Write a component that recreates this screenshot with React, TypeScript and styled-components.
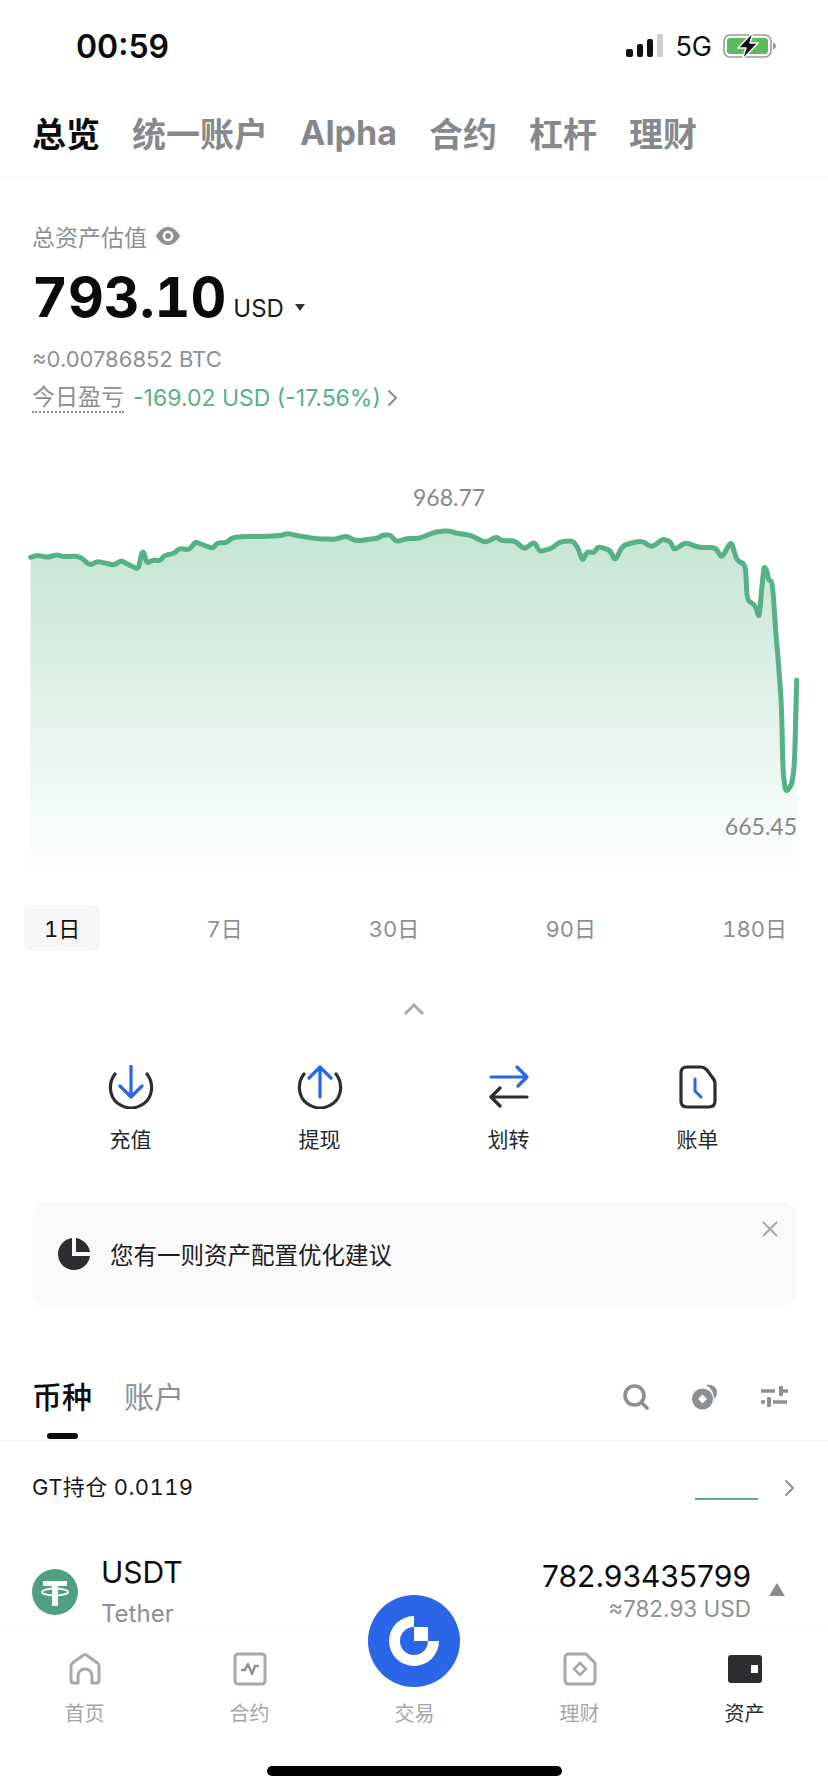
import React from 'react';
import styled, { createGlobalStyle } from 'styled-components';

const FONT = 'Inter, "Noto Sans CJK SC", sans-serif';
const GREEN = '#57b186';
const GRAY = '#8b9095';
const DARK = '#2b2d31';
const BLUE = '#2b66e8';

// traced from the reference at 1.894x horizontal, 3x vertical
const TRACE = [
  [58, 262], [70, 256], [90, 262], [108, 254], [120, 260], [145, 258], [155, 265], [170, 285], [185, 274], [200, 280],
  [215, 285], [230, 272], [245, 285], [262, 298], [268, 250], [272, 245], [278, 280], [290, 270], [303, 272], [312, 256],
  [330, 250], [340, 235], [358, 240], [370, 215], [385, 225], [403, 235], [412, 218], [428, 218], [443, 200], [530, 198],
  [545, 190], [565, 198], [600, 206], [635, 208], [655, 198], [675, 213], [715, 205], [725, 195], [740, 195], [750, 215],
  [770, 206], [795, 205], [825, 185], [850, 182], [865, 190], [890, 195], [920, 218], [940, 200], [950, 212], [975, 212],
  [993, 238], [1012, 215], [1022, 245], [1045, 235], [1060, 215], [1085, 212], [1095, 235], [1103, 273], [1112, 245],
  [1125, 248], [1133, 230], [1155, 240], [1165, 272], [1180, 225], [1215, 212], [1235, 232], [1255, 207], [1270, 215],
  [1277, 240], [1298, 217], [1325, 233], [1355, 232], [1367, 265], [1385, 212], [1395, 270], [1412, 285], [1415, 390],
  [1430, 405], [1438, 445], [1443, 350], [1447, 290], [1452, 300], [1456, 330], [1463, 335], [1470, 500], [1473, 550],
  [1480, 700], [1483, 900], [1487, 960], [1492, 962], [1500, 940], [1505, 880], [1509, 630],
];
const POINTS = TRACE.map(([x, y]) => [x / 1.894, y / 3]);

// straight runs with small rounded corners, the line in the reference is jagged but soft
function roundedPath(points: number[][], amount = 0.3) {
  const fmt = (x: number, y: number) => `${x.toFixed(1)},${y.toFixed(1)}`;
  let d = `M${fmt(points[0][0], points[0][1])}`;
  for (let i = 1; i < points.length - 1; i++) {
    const [x, y] = points[i];
    const [px, py] = points[i - 1];
    const [nx, ny] = points[i + 1];
    d += ` L${fmt(x - (x - px) * amount, y - (y - py) * amount)}`;
    d += ` Q${fmt(x, y)} ${fmt(x + (nx - x) * amount, y + (ny - y) * amount)}`;
  }
  const last = points[points.length - 1];
  return `${d} L${fmt(last[0], last[1])}`;
}

const LINE_PATH = roundedPath(POINTS);
const AREA_PATH = `${LINE_PATH} L797,400 L30,400 Z`;

const TOP_TABS = ['总览', '统一账户', 'Alpha', '合约', '杠杆', '理财'];
const RANGES = ['1日', '7日', '30日', '90日', '180日'];

const GlobalStyle = createGlobalStyle`
  html, body {
    margin: 0;
    background: #fff;
  }
  body {
    font-family: ${FONT};
  }
`;

function SignalIcon() {
  return (
    <svg width="38" height="24" viewBox="0 0 38 24">
      <rect x="0" y="15" width="7" height="8" rx="2" fill="#111" />
      <rect x="11" y="10" width="6" height="13" rx="2" fill="#111" />
      <rect x="21" y="5" width="6" height="18" rx="2" fill="#111" />
      <rect x="31" y="0" width="6" height="23" rx="1" fill="#cfcfcf" />
    </svg>
  );
}

function BatteryIcon() {
  return (
    <svg width="54" height="28" viewBox="0 0 54 28">
      <rect x="1" y="3" width="47" height="22" rx="6" fill="none" stroke="#9a9a9a" strokeWidth="1.6" />
      <rect x="4" y="6" width="41" height="16" rx="3" fill="#5cbb5f" />
      <path d="M50 10.5c2 .5 3 2 3 3.5s-1 3-3 3.5z" fill="#9a9a9a" />
      <path d="M30 0 L15 16 H23 L19 28 L35 11 H27 Z" fill="#111" stroke="#fff" strokeWidth="1.4" strokeLinejoin="round" />
    </svg>
  );
}

function EyeIcon() {
  return (
    <svg width="26" height="20" viewBox="0 0 26 20">
      <path d="M1 10 C5 3 9 1 13 1 s8 2 12 9 c-4 7-8 9-12 9 S5 17 1 10z" fill={GRAY} />
      <circle cx="13" cy="10" r="5.4" fill="#fff" />
      <circle cx="13" cy="10" r="3" fill={GRAY} />
    </svg>
  );
}

function ChevronRight({ color = GRAY }: { color?: string }) {
  return (
    <svg width="11" height="18" viewBox="0 0 11 18">
      <path d="M2 2 L9 9 L2 16" fill="none" stroke={color} strokeWidth="2" strokeLinecap="round" />
    </svg>
  );
}

function DepositIcon() {
  return (
    <svg width="46" height="44" viewBox="0 0 46 44">
      <path d="M7 9 C0 18 1 32 10 38.5 C15 42 19 43 23 43 C27 43 31 42 36 38.5 C45 32 46 18 39 9" fill="none" stroke={DARK} strokeWidth="3.2" strokeLinecap="round" />
      <path d="M23 1 V31 M12 21 L23 32 L34 21" fill="none" stroke={BLUE} strokeWidth="3.2" strokeLinecap="round" strokeLinejoin="round" />
    </svg>
  );
}

function WithdrawIcon() {
  return (
    <svg width="46" height="44" viewBox="0 0 46 44">
      <path d="M7 9 C0 18 1 32 10 38.5 C15 42 19 43 23 43 C27 43 31 42 36 38.5 C45 32 46 18 39 9" fill="none" stroke={DARK} strokeWidth="3.2" strokeLinecap="round" />
      <path d="M23 32 V2 M12 13 L23 2 L34 13" fill="none" stroke={BLUE} strokeWidth="3.2" strokeLinecap="round" strokeLinejoin="round" />
    </svg>
  );
}

function TransferIcon() {
  return (
    <svg width="42" height="44" viewBox="0 0 42 44">
      <path d="M3 12 H39 M29 2 L39 12 L30 21" fill="none" stroke={BLUE} strokeWidth="3.2" strokeLinecap="round" strokeLinejoin="round" />
      <path d="M39 32 H3 M12 23 L3 32 L12 41" fill="none" stroke={DARK} strokeWidth="3.2" strokeLinecap="round" strokeLinejoin="round" />
    </svg>
  );
}

function BillIcon() {
  return (
    <svg width="38" height="44" viewBox="0 0 38 44">
      <path d="M8 2 H22 C25 2 26 3 28 5 L33 12 C35 14 36 16 36 19 V36 C36 40 34 42 30 42 H8 C4 42 2 40 2 36 V8 C2 4 4 2 8 2 Z" fill="none" stroke={DARK} strokeWidth="3.2" />
      <path d="M16 14 V26 L22 32" fill="none" stroke={BLUE} strokeWidth="3" strokeLinecap="round" strokeLinejoin="round" />
    </svg>
  );
}

function PieIcon() {
  return (
    <svg width="32" height="32" viewBox="0 0 32 32">
      <path d="M14 0 V18 H32 C31 26 24 32 16 32 C7 32 0 25 0 16 C0 8 6 1 14 0 Z" fill={DARK} />
      <path d="M18 0 C25 1 31 7 32 14 H18 Z" fill={DARK} />
    </svg>
  );
}

function CloseIcon() {
  return (
    <svg width="16" height="16" viewBox="0 0 16 16">
      <path d="M1.5 1.5 L14.5 14.5 M14.5 1.5 L1.5 14.5" stroke="#a3a6a9" strokeWidth="1.8" strokeLinecap="round" />
    </svg>
  );
}

function SearchIcon() {
  return (
    <svg width="26" height="26" viewBox="0 0 26 26">
      <circle cx="11.5" cy="11.5" r="9.5" fill="none" stroke={GRAY} strokeWidth="3.6" />
      <path d="M19 19 L24 24" stroke={GRAY} strokeWidth="3.6" strokeLinecap="round" />
    </svg>
  );
}

function CoinsIcon() {
  return (
    <svg width="26" height="26" viewBox="0 0 26 26">
      <path d="M14 1 C20 0 25 3 25 8 C25 11 24 13 22 15 C22 9 19 4 14 1 Z" fill={GRAY} />
      <circle cx="10.5" cy="15" r="10.5" fill={GRAY} />
      <path d="M10.5 10.5 L15 15 L10.5 19.5 L6 15 Z" fill="#fff" />
    </svg>
  );
}

function SlidersIcon() {
  return (
    <svg width="27" height="22" viewBox="0 0 27 22">
      <path d="M0 5 H14 M19 5 H27 M0 16 H4 M12 16 H26" stroke={GRAY} strokeWidth="3.4" />
      <rect x="18" y="0" width="4" height="10" rx="1" fill={GRAY} />
      <rect x="6" y="11" width="4" height="10" rx="1" fill={GRAY} />
    </svg>
  );
}

function TetherIcon() {
  return (
    <svg width="46" height="46" viewBox="0 0 46 46">
      <circle cx="23" cy="23" r="23" fill="#50a07f" />
      <path d="M11 12 H35 V17 H26 V37 H20 V17 H11 Z" fill="#fff" />
      <ellipse cx="23" cy="23" rx="13" ry="3.5" fill="none" stroke="#fff" strokeWidth="1.8" />
    </svg>
  );
}

function HomeIcon() {
  return (
    <svg width="32" height="32" viewBox="0 0 32 32">
      <path d="M5 30 C3 30 2 29 2 27 V13 C2 12 2.5 11 3.5 10 L14 2.5 C15 1.5 17 1.5 18 2.5 L28.5 10 C29.5 11 30 12 30 13 V27 C30 29 29 30 27 30 H23 V23 C23 19 20 16 16 16 C12 16 9 19 9 23 V30 Z" fill="none" stroke="#a8a8a8" strokeWidth="3" strokeLinejoin="round" />
    </svg>
  );
}

function ContractIcon() {
  return (
    <svg width="34" height="34" viewBox="0 0 34 34">
      <rect x="2" y="2" width="30" height="30" rx="3" fill="none" stroke="#a8a8a8" strokeWidth="3" />
      <path d="M8 18 H12 L15 12 L19 22 L22 14 H26" fill="none" stroke="#8f8f8f" strokeWidth="2.4" strokeLinejoin="round" />
    </svg>
  );
}

function EarnIcon() {
  return (
    <svg width="34" height="34" viewBox="0 0 34 34">
      <path d="M6 2 H23 L32 11 V28 C32 30.5 30.5 32 28 32 H6 C3.5 32 2 30.5 2 28 V6 C2 3.5 3.5 2 6 2 Z" fill="none" stroke="#a8a8a8" strokeWidth="3" strokeLinejoin="round" />
      <path d="M17 11 L23 17 L17 23 L11 17 Z" fill="none" stroke="#a8a8a8" strokeWidth="2.6" />
    </svg>
  );
}

function WalletIcon() {
  return (
    <svg width="34" height="28" viewBox="0 0 34 28">
      <rect width="34" height="28" rx="3" fill={DARK} />
      <rect x="23" y="10" width="7" height="8" fill="#fff" />
    </svg>
  );
}

function GateLogo() {
  return (
    <svg width="50" height="50" viewBox="0 0 50 50">
      <path d="M25 0 A25 25 0 1 0 50 25 H39 A14 14 0 1 1 25 11 Z" fill="#fff" />
      <rect x="25" y="11" width="14" height="14" fill="#fff" />
    </svg>
  );
}

const ACTIONS = [
  { label: '充值', icon: <DepositIcon /> },
  { label: '提现', icon: <WithdrawIcon /> },
  { label: '划转', icon: <TransferIcon /> },
  { label: '账单', icon: <BillIcon /> },
];

const NAV_ITEMS = [
  { label: '首页', icon: <HomeIcon />, active: false },
  { label: '合约', icon: <ContractIcon />, active: false },
  { label: '交易', icon: null, active: false },
  { label: '理财', icon: <EarnIcon />, active: false },
  { label: '资产', icon: <WalletIcon />, active: true },
];

export default function App() {
  return (
    <Page>
      <GlobalStyle />
      <Main>
        <StatusBar>
          <Clock>00:59</Clock>
          <StatusRight>
            <SignalIcon />
            <Network>5G</Network>
            <BatteryIcon />
          </StatusRight>
        </StatusBar>

        <TopTabs>
          {TOP_TABS.map((tab, index) => (
            <TopTab key={tab} active={index === 0}>{tab}</TopTab>
          ))}
        </TopTabs>

        <Summary>
          <LabelRow>
            <span>总资产估值</span>
            <EyeIcon />
          </LabelRow>
          <BalanceRow>
            <Balance>793.10</Balance>
            <Currency>USD</Currency>
            <Caret />
          </BalanceRow>
          <BtcRow>≈0.00786852 BTC</BtcRow>
          <PnlRow>
            <PnlLabel>今日盈亏</PnlLabel>
            <PnlValue>-169.02 USD (-17.56%)</PnlValue>
            <ChevronRight />
          </PnlRow>
        </Summary>

        <Chart>
          <svg width="828" height="400" viewBox="0 0 828 400" style={{ display: 'block' }}>
            <defs>
              <linearGradient id="area" x1="0" y1="0" x2="0" y2="1">
                <stop offset="0" stopColor="#c4e5d4" />
                <stop offset="0.5" stopColor="#e0f2e9" />
                <stop offset="0.85" stopColor="#f5fbf8" />
                <stop offset="1" stopColor="#ffffff" />
              </linearGradient>
            </defs>
            <path d={AREA_PATH} fill="url(#area)" />
            <path d={LINE_PATH} fill="none" stroke={GREEN} strokeWidth="5" strokeLinejoin="round" strokeLinecap="round" />
          </svg>
          <HighLabel>968.77</HighLabel>
          <LowLabel>665.45</LowLabel>
        </Chart>

        <Ranges>
          {RANGES.map((range, index) => (
            <RangeItem key={range} active={index === 0}>{range}</RangeItem>
          ))}
        </Ranges>

        <CollapseRow>
          <svg width="22" height="14" viewBox="0 0 22 14">
            <path d="M2 12 L11 3 L20 12" fill="none" stroke="#a8abae" strokeWidth="3" />
          </svg>
        </CollapseRow>

        <Actions>
          {ACTIONS.map((action) => (
            <Action key={action.label}>
              <ActionIcon>{action.icon}</ActionIcon>
              <ActionLabel>{action.label}</ActionLabel>
            </Action>
          ))}
        </Actions>

        <Banner>
          <PieIcon />
          <BannerText>您有一则资产配置优化建议</BannerText>
          <BannerClose>
            <CloseIcon />
          </BannerClose>
        </Banner>

        <AssetTabs>
          <AssetTab active>
            币种
            <AssetTabMark />
          </AssetTab>
          <AssetTab>
            账户
            <AssetTabMark hidden />
          </AssetTab>
          <AssetTools>
            <SearchIcon />
            <CoinsIcon />
            <SlidersIcon />
          </AssetTools>
        </AssetTabs>

        <GtRow>
          <GtText>GT持仓 0.0119</GtText>
          <GtTrend />
          <GtChevron>
            <ChevronRight />
          </GtChevron>
        </GtRow>

        <CoinRow>
          <CoinLogo>
            <TetherIcon />
          </CoinLogo>
          <CoinName>
            <CoinSymbol>USDT</CoinSymbol>
            <CoinFull>Tether</CoinFull>
          </CoinName>
          <CoinAmount>
            <CoinQty>782.93435799</CoinQty>
            <CoinFiat>≈782.93 USD</CoinFiat>
          </CoinAmount>
          <CoinCaret />
        </CoinRow>
      </Main>

      <BottomNav>
        {NAV_ITEMS.map((item) => (
          <NavItem key={item.label}>
            <NavIcon>{item.icon}</NavIcon>
            <NavLabel active={item.active}>{item.label}</NavLabel>
          </NavItem>
        ))}
        <TradeButton>
          <GateLogo />
        </TradeButton>
        <HomeBar />
      </BottomNav>
    </Page>
  );
}

const Page = styled.div`
  position: relative;
  display: flex;
  flex-direction: column;
  width: 828px;
  height: 1792px;
  overflow: hidden;
  background: #fff;
`;

const Main = styled.div`
  flex: 1;
  min-height: 0;
  overflow: hidden;
`;

const StatusBar = styled.div`
  display: flex;
  align-items: center;
  justify-content: space-between;
  box-sizing: border-box;
  height: 92px;
  padding: 0 51px 0 76px;
`;

const Clock = styled.div`
  font-size: 32px;
  font-weight: 600;
  color: #0c0c0c;
`;

const StatusRight = styled.div`
  display: flex;
  align-items: center;
  gap: 11px;
`;

const Network = styled.span`
  font-size: 27px;
  color: #111;
`;

const TopTabs = styled.div`
  display: flex;
  align-items: center;
  gap: 32px;
  box-sizing: border-box;
  height: 86px;
  padding: 0 32px 4px;
  border-bottom: 1px solid #f3f3f3;
`;

const TopTab = styled.div<{ active?: boolean }>`
  font-size: 34px;
  font-weight: 700;
  color: ${({ active }) => (active ? '#0c0c0c' : '#85898d')};
`;

const Summary = styled.div`
  padding: 44px 32px 0;
`;

const LabelRow = styled.div`
  display: flex;
  align-items: center;
  gap: 8px;
  height: 28px;
  font-size: 23px;
  color: ${GRAY};
`;

const BalanceRow = styled.div`
  display: flex;
  align-items: baseline;
  height: 60px;
  margin-top: 17px;
  line-height: 60px;
`;

const Balance = styled.span`
  font-size: 55.5px;
  font-weight: 700;
  font-variant-numeric: tabular-nums;
  color: #0a0a0a;
`;

const Currency = styled.span`
  margin-left: 7px;
  font-size: 24px;
  color: #1a1a1a;
`;

const Caret = styled.span`
  align-self: center;
  width: 0;
  height: 0;
  margin: 20px 0 0 11px;
  border-left: 5px solid transparent;
  border-right: 5px solid transparent;
  border-top: 7px solid #333;
`;

const BtcRow = styled.div`
  height: 28px;
  margin-top: 18px;
  font-size: 22px;
  line-height: 28px;
  color: ${GRAY};
`;

const PnlRow = styled.div`
  display: flex;
  align-items: center;
  height: 28px;
  margin-top: 11px;
`;

const PnlLabel = styled.span`
  font-size: 23px;
  line-height: 28px;
  color: ${GRAY};
  border-bottom: 2px dotted ${GRAY};
`;

const PnlValue = styled.span`
  margin: 0 6px 0 9px;
  font-size: 23px;
  color: ${GREEN};
`;

const Chart = styled.div`
  position: relative;
  height: 400px;
  margin-top: 58px;
`;

const ChartLabel = styled.span`
  position: absolute;
  font-family: Lato, sans-serif;
  font-size: 23px;
  line-height: 28px;
  color: #85898d;
`;

const HighLabel = styled(ChartLabel)`
  top: 13px;
  left: 413px;
`;

const LowLabel = styled(ChartLabel)`
  top: 342px;
  right: 31px;
`;

const Ranges = styled.div`
  display: flex;
  justify-content: space-between;
  box-sizing: border-box;
  height: 46px;
  margin-top: 35px;
  padding: 0 21px 0 24px;
`;

const RangeItem = styled.div<{ active?: boolean }>`
  display: flex;
  align-items: center;
  padding: 0 20px 3px;
  border-radius: 8px;
  font-size: 22px;
  font-variant-numeric: tabular-nums;
  color: ${({ active }) => (active ? '#111' : GRAY)};
  background: ${({ active }) => (active ? '#f6f6f6' : 'transparent')};
`;

const CollapseRow = styled.div`
  display: flex;
  align-items: center;
  justify-content: center;
  height: 24px;
  margin-top: 46px;
`;

const Actions = styled.div`
  display: grid;
  grid-template-columns: repeat(4, 189px);
  margin-top: 44px;
  padding-left: 36px;
`;

const Action = styled.div`
  display: flex;
  flex-direction: column;
  align-items: center;
`;

const ActionIcon = styled.div`
  display: flex;
  align-items: center;
  justify-content: center;
  height: 44px;
`;

const ActionLabel = styled.div`
  margin-top: 17px;
  font-size: 21px;
  line-height: 28px;
  color: #26282b;
`;

const Banner = styled.div`
  position: relative;
  display: flex;
  align-items: center;
  gap: 20px;
  box-sizing: border-box;
  height: 104px;
  margin: 48px 32px 0;
  padding-left: 26px;
  border-radius: 14px;
  background: #f9f9f9;
`;

const BannerText = styled.div`
  font-size: 23.5px;
  color: #1c1d1f;
`;

const BannerClose = styled.div`
  position: absolute;
  top: 19px;
  right: 18px;
  line-height: 0;
`;

const AssetTabs = styled.div`
  display: flex;
  align-items: flex-start;
  gap: 32px;
  box-sizing: border-box;
  height: 135px;
  padding: 70px 32px 0;
  border-bottom: 1px solid #f0f0f0;
`;

const AssetTab = styled.div<{ active?: boolean }>`
  display: flex;
  flex-direction: column;
  align-items: center;
  font-size: 30px;
  font-weight: ${({ active }) => (active ? 500 : 400)};
  line-height: 42px;
  color: ${({ active }) => (active ? '#0c0c0c' : GRAY)};
`;

const AssetTabMark = styled.span<{ hidden?: boolean }>`
  display: block;
  visibility: ${({ hidden }) => (hidden ? 'hidden' : 'visible')};
  width: 31px;
  height: 6px;
  margin-top: 15px;
  border-radius: 3px;
  background: #0c0c0c;
`;

const AssetTools = styled.div`
  display: flex;
  align-items: center;
  gap: 43px;
  height: 42px;
  margin-left: auto;
  padding-right: 8px;
`;

const GtRow = styled.div`
  display: flex;
  align-items: center;
  box-sizing: border-box;
  height: 94px;
  padding: 0 33px 6px 32px;
`;

const GtText = styled.div`
  flex: 1;
  font-size: 22px;
  font-variant-numeric: tabular-nums;
  letter-spacing: 0.4px;
  color: #17181a;
`;

const GtTrend = styled.span`
  align-self: center;
  width: 63px;
  height: 2px;
  margin: 28px 26px 0 0;
  background: ${GREEN};
`;

const GtChevron = styled.span`
  margin-top: 6px;
  line-height: 0;
`;

const CoinRow = styled.div`
  display: flex;
  align-items: flex-start;
  padding: 19px 77px 0 32px;
`;

const CoinLogo = styled.div`
  margin-top: 15px;
  line-height: 0;
`;

const CoinName = styled.div`
  flex: 1;
  margin-left: 23px;
`;

const CoinSymbol = styled.div`
  font-size: 30px;
  line-height: 36px;
  color: #0c0c0c;
`;

const CoinFull = styled.div`
  margin-top: 9px;
  font-size: 24px;
  line-height: 30px;
  color: ${GRAY};
`;

const CoinAmount = styled.div`
  padding-top: 4px;
  text-align: right;
`;

const CoinQty = styled.div`
  font-size: 30px;
  line-height: 36px;
  color: #0c0c0c;
`;

const CoinFiat = styled.div`
  font-size: 22.5px;
  line-height: 30px;
  color: ${GRAY};
`;

const CoinCaret = styled.span`
  position: absolute;
  top: 1583px;
  right: 43px;
  width: 0;
  height: 0;
  border-left: 8px solid transparent;
  border-right: 8px solid transparent;
  border-bottom: 13px solid #8a8d90;
`;

const BottomNav = styled.div`
  position: relative;
  display: grid;
  grid-template-columns: repeat(5, 165px);
  flex: none;
  box-sizing: border-box;
  height: 165px;
  padding: 24px 0 0 2px;
  border-top: 1px solid #f5f5f5;
  background: #fff;
`;

const NavItem = styled.div`
  display: flex;
  flex-direction: column;
  align-items: center;
`;

const NavIcon = styled.div`
  display: flex;
  align-items: center;
  justify-content: center;
  height: 34px;
`;

const NavLabel = styled.div<{ active?: boolean }>`
  margin-top: 15px;
  font-size: 20px;
  line-height: 26px;
  color: ${({ active }) => (active ? '#2a2b2d' : '#a3a6a9')};
`;

const TradeButton = styled.div`
  position: absolute;
  top: -33px;
  left: 368px;
  display: flex;
  align-items: center;
  justify-content: center;
  width: 92px;
  height: 92px;
  border-radius: 50%;
  background: ${BLUE};
`;

const HomeBar = styled.div`
  position: absolute;
  bottom: 16px;
  left: 267px;
  width: 295px;
  height: 10px;
  border-radius: 5px;
  background: #000;
`;
